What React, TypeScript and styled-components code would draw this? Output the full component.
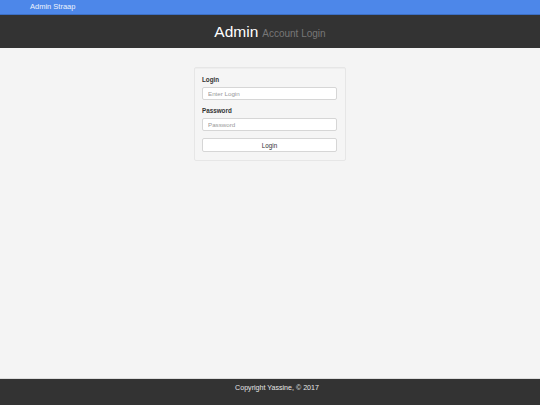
import React from "react";
import styled, { createGlobalStyle } from "styled-components";

const Global = createGlobalStyle`
  html, body { margin: 0; padding: 0; height: 100%; }
  body { background: #f4f4f4; font-family: "Liberation Sans", Arial, sans-serif; }
  #root { height: 100%; }
  * { box-sizing: border-box; }
`;

const Page = styled.div`
  display: flex;
  flex-direction: column;
  height: 405px;
`;

const NavBar = styled.div`
  height: 15px;
  background: #4d87e9;
  border-bottom: 1px solid #3c6fc4;
  display: flex;
  align-items: center;
  padding-left: 30px;
`;

const Brand = styled.span`
  color: #eef3fd;
  font-size: 7.5px;
  line-height: 14px;
`;

const Header = styled.header`
  height: 33px;
  background: #333333;
  display: flex;
  justify-content: center;
  align-items: flex-start;
  padding-top: 8px;
`;

const Title = styled.h1`
  margin: 0;
  font-weight: 400;
  font-size: 15.5px;
  line-height: 18px;
  color: #ffffff;
`;

const Small = styled.small`
  font-size: 10px;
  color: #777777;
  margin-left: 4px;
`;

const Main = styled.main`
  flex: 1;
  display: flex;
  justify-content: center;
  align-items: flex-start;
  padding-top: 19px;
`;

const Well = styled.form`
  width: 152px;
  background: #f5f5f5;
  border: 1px solid #e6e6e6;
  border-radius: 2px;
  box-shadow: inset 0 1px 1px rgba(0, 0, 0, 0.03);
  padding: 8px 8px 8px 7px;
  display: flex;
  flex-direction: column;
`;

const Label = styled.label`
  font-size: 6.3px;
  font-weight: 700;
  color: #333333;
  line-height: 8px;
  margin-bottom: 3px;
`;

const Input = styled.input`
  height: 13px;
  width: 100%;
  border: 1px solid #d6d6d6;
  border-radius: 2px;
  background: #ffffff;
  font-family: "Liberation Sans", Arial, sans-serif;
  font-size: 6.2px;
  padding: 0 5px;
  margin: 0 0 7px 0;
  outline: none;
  &::placeholder { color: #999999; }
`;

const Button = styled.button`
  height: 14px;
  width: 100%;
  border: 1px solid #d6d6d6;
  border-radius: 2px;
  background: #ffffff;
  color: #333333;
  font-family: "Liberation Sans", Arial, sans-serif;
  font-size: 6.3px;
  padding: 0;
  cursor: pointer;
`;

const Footer = styled.footer`
  height: 27px;
  border-top: 1px solid #dcdcdc;
  background: #333333;
  display: flex;
  justify-content: center;
  align-items: flex-start;
  padding-top: 5px;
  padding-left: 14px;
`;

const FooterText = styled.p`
  margin: 0;
  color: #e6e6e6;
  font-size: 7.1px;
  line-height: 9px;
`;

export default function App() {
  return (
    <>
      <Global />
      <Page>
        <NavBar>
          <Brand>Admin Straap</Brand>
        </NavBar>
        <Header>
          <Title>
            Admin<Small>Account Login</Small>
          </Title>
        </Header>
        <Main>
          <Well onSubmit={(e) => e.preventDefault()}>
            <Label>Login</Label>
            <Input type="text" placeholder="Enter Login" />
            <Label>Password</Label>
            <Input type="password" placeholder="Password" />
            <Button type="submit">Login</Button>
          </Well>
        </Main>
        <Footer>
          <FooterText>Copyright Yassine, © 2017</FooterText>
        </Footer>
      </Page>
    </>
  );
}
